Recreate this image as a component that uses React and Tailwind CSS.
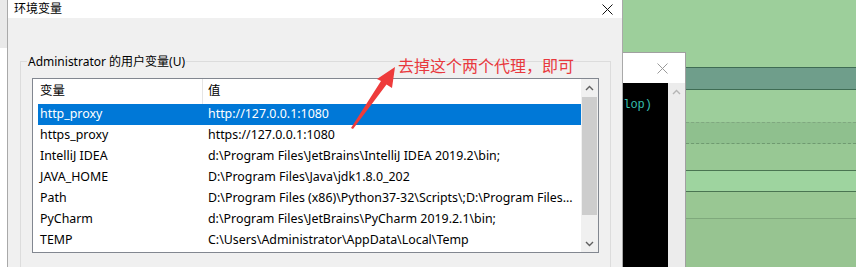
import React from "react";

const rows = [
  { name: "http_proxy", value: "http://127.0.0.1:1080", selected: true },
  { name: "https_proxy", value: "https://127.0.0.1:1080" },
  { name: "IntelliJ IDEA", value: "d:\\Program Files\\JetBrains\\IntelliJ IDEA 2019.2\\bin;" },
  { name: "JAVA_HOME", value: "D:\\Program Files\\Java\\jdk1.8.0_202" },
  { name: "Path", value: "D:\\Program Files (x86)\\Python37-32\\Scripts\\;D:\\Program Files..." },
  { name: "PyCharm", value: "d:\\Program Files\\JetBrains\\PyCharm 2019.2.1\\bin;" },
  { name: "TEMP", value: "C:\\Users\\Administrator\\AppData\\Local\\Temp" },
];

const CloseIcon = ({ color = "#111" }) => (
  <svg width="11" height="11" viewBox="0 0 11 11">
    <path d="M0.5 0.5 L10.5 10.5 M10.5 0.5 L0.5 10.5" stroke={color} strokeWidth="1" />
  </svg>
);

const Chevron = ({ up = true, color = "#606060" }) => (
  <svg width="9" height="6" viewBox="0 0 9 6">
    <polyline
      points={up ? "1,5 4.5,1.5 8,5" : "1,1 4.5,4.5 8,1"}
      fill="none"
      stroke={color}
      strokeWidth="1.4"
    />
  </svg>
);

const App = () => {
  return (
    <div className="relative flex h-[267px] w-[856px] overflow-hidden bg-white font-['Noto_Sans','Noto_Sans_CJK_SC',sans-serif] text-[12px] text-black">
      {/* window edge behind the dialog */}
      <div className="flex w-[7px] flex-col">
        <div className="h-[48px] bg-[#e9e9e9]" />
        <div className="flex-1 bg-white" />
      </div>

      {/* 环境变量 dialog */}
      <div className="flex w-[616px] flex-col border-x border-[#a9a9a9] bg-[#f0f0f0]">
        <div className="flex h-[25px] items-center justify-between bg-white pl-[6px] pr-[9px]">
          <span>环境变量</span>
          <CloseIcon />
        </div>
        <div className="flex-1 px-[11px] pl-[12px] pt-[35px]">
          <fieldset className="h-[260px] border border-[#dcdcdc] px-[11px]">
            <legend className="-ml-[5px] px-[1px] leading-[17px]">Administrator 的用户变量(U)</legend>
            <div className="mt-[8px] flex h-[175px] border border-[#828790] bg-white text-[12.4px]">
              <div className="flex flex-1 flex-col">
                <div className="flex h-[25px]">
                  <div className="flex w-[170px] items-center border-r border-[#e5e5e5] pl-[7px]">变量</div>
                  <div className="flex items-center pl-[5px]">值</div>
                </div>
                <div className="flex flex-col pl-[5px]">
                  {rows.map((row) => (
                    <div
                      key={row.name}
                      className={
                        row.selected
                          ? "flex h-[21px] items-center whitespace-nowrap bg-[#0078d7] text-white"
                          : "flex h-[21px] items-center whitespace-nowrap"
                      }
                    >
                      <div className="w-[165px] pl-[2px]">{row.name}</div>
                      <div className="pl-[5px]">{row.value}</div>
                    </div>
                  ))}
                </div>
              </div>
              <div className="flex w-[17px] flex-col bg-[#f0f0f0]">
                <div className="flex h-[18px] items-center justify-center">
                  <Chevron up />
                </div>
                <div className="mx-[1px] h-[118px] bg-[#cdcdcd]" />
                <div className="flex-1" />
                <div className="flex h-[17px] items-center justify-center">
                  <Chevron up={false} />
                </div>
              </div>
            </div>
          </fieldset>
        </div>
      </div>

      {/* desktop on the right */}
      <div className="flex flex-1 flex-col bg-[#9dcf9b]">
        <div className="h-[52px]" />
        <div className="flex flex-1">
          <div className="flex w-[63px] flex-col border-r border-t border-[#a0a0a0]">
            <div className="flex h-[30px] items-center justify-end bg-white pr-[17px]">
              <CloseIcon color="#9a9a9a" />
            </div>
            <div className="flex flex-1">
              <div className="flex w-[45px] justify-end whitespace-nowrap bg-black pr-[16px] pt-[14px] font-['Liberation_Mono',monospace] text-[12px] leading-[16px] text-[#35bfae]">
                <span>lop)</span>
              </div>
              <div className="flex flex-1 justify-center bg-[#ececec] pt-[6px]">
                <div>
                  <Chevron up color="#b5b5b5" />
                </div>
              </div>
            </div>
          </div>
          <div className="flex flex-1 flex-col">
            <div className="h-[15px] bg-[#9dcf9b]" />
            <div className="h-[23px] border-y border-[#3f6c54] bg-[#6f9e8b]" />
            <div className="h-[32px] bg-[#9dce9b]" />
            <div className="h-[22px] border-t border-b border-dashed border-t-[#80a880] border-b-[#6f9a70] bg-[#8fc08e]" />
            <div className="h-[26px] bg-[#98c894]" />
            <div className="h-[22px] border-y border-[#4a7552] bg-[#9ed49f]" />
            <div className="h-[27px] border-b border-[#7fa97c] bg-[#99c793]" />
            <div className="flex-1 bg-[#97c491]" />
          </div>
        </div>
      </div>

      {/* annotation drawn on top of the screenshot */}
      <div className="pointer-events-none absolute inset-0">
        <svg className="absolute left-0 top-0" width="856" height="267" viewBox="0 0 856 267">
          <polygon
            points="395,67 392,88 386.5,84.5 353,129 351,128 381,81 377,79"
            fill="#ee3b3b"
          />
        </svg>
        <div className="absolute left-[398px] top-[56px] whitespace-nowrap text-[16px] leading-[20px] text-[#e8383d]">
          去掉这个两个代理，即可
        </div>
      </div>
    </div>
  );
};

export default App;
